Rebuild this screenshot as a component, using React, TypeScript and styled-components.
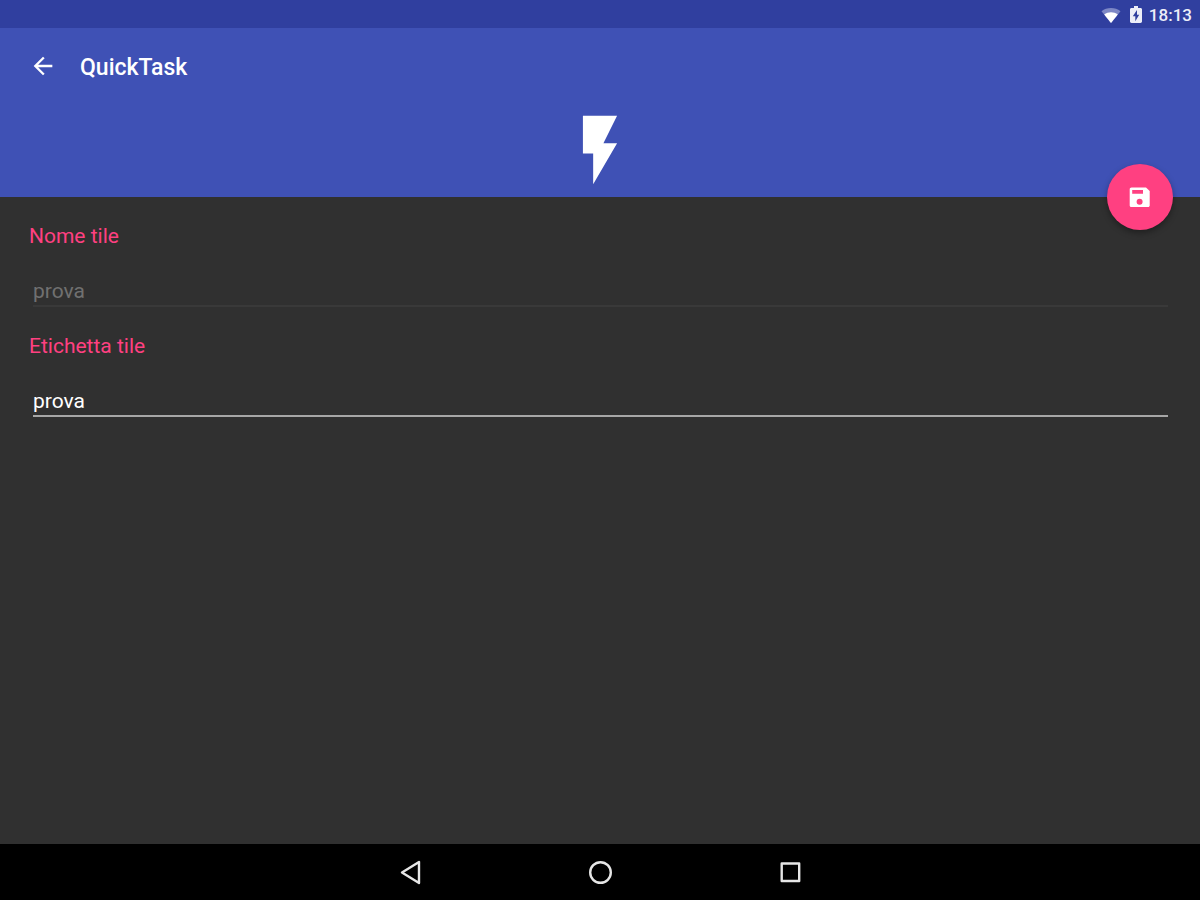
import React, { useState } from "react";
import styled, { createGlobalStyle } from "styled-components";

const GlobalStyle = createGlobalStyle`
  *, *::before, *::after { box-sizing: border-box; }
  body {
    margin: 0;
    background: #303030;
    font-family: Roboto, "Noto Sans", sans-serif;
    color: #fff;
  }
  button { border: 0; padding: 0; background: none; color: inherit; cursor: pointer; }
  svg { display: block; }
`;

const Screen = styled.div`
  min-height: 100vh;
  display: flex;
  flex-direction: column;
`;

const StatusBar = styled.div`
  height: 28px;
  padding: 2px 8px 0 0;
  display: flex;
  align-items: center;
  justify-content: flex-end;
  background: #303f9f;
`;

const WifiIcon = styled.svg`
  width: 20px;
  height: 20px;
`;

const BatteryIcon = styled.svg`
  width: 20px;
  height: 20px;
  margin: 0 3px 0 5px;
`;

const Clock = styled.time`
  font-size: 17px;
  line-height: 20px;
  font-weight: 500;
  color: #eceef8;
`;

const Header = styled.header`
  position: relative;
  height: 169px;
  display: flex;
  flex-direction: column;
  align-items: center;
  background: #3f51b5;
`;

const Toolbar = styled.div`
  align-self: stretch;
  height: 76px;
  padding-left: 29px;
  display: flex;
  align-items: center;
  gap: 23px;
`;

const IconButton = styled.button<{ $size: number }>`
  width: ${(p) => p.$size}px;
  height: ${(p) => p.$size}px;

  svg { width: 100%; height: 100%; }
`;

const Title = styled.h1`
  margin: 0;
  padding-top: 3px;
  font-size: 23px;
  line-height: 28px;
  font-weight: 500;
`;

const Bolt = styled.svg`
  width: 82px;
  height: 82px;
  margin-top: 5px;
`;

const SaveButton = styled.button`
  position: absolute;
  right: 27px;
  bottom: -33px;
  width: 66px;
  height: 66px;
  display: flex;
  align-items: center;
  justify-content: center;
  border-radius: 50%;
  background: #ff4081;
  box-shadow: 0 3px 6px rgba(0, 0, 0, 0.35);

  svg { width: 26px; height: 26px; }
`;

const Form = styled.form`
  flex: 1;
  padding: 25px 28px 25px 29px;
  display: flex;
  flex-direction: column;
  gap: 25px;
`;

const Field = styled.div`
  display: flex;
  flex-direction: column;
  gap: 27px;
`;

const Label = styled.label`
  font-size: 21px;
  line-height: 28px;
  color: #ff4081;
`;

const TextInput = styled.input`
  height: 30px;
  margin: 0 4px;
  padding: 0;
  border: 0;
  border-bottom: 2px solid #a6a6a6;
  border-radius: 0;
  outline: 0;
  background: transparent;
  font: 21px/28px Roboto, "Noto Sans", sans-serif;
  color: #fff;

  &:disabled {
    color: #707070;
    border-bottom-color: #393939;
  }
`;

const NavBar = styled.nav`
  height: 56px;
  display: flex;
  align-items: center;
  justify-content: center;
  gap: 162px;
  background: #000;
  color: #e6e6e6;
`;

export default function App() {
  const [caption, setCaption] = useState("prova");

  return (
    <Screen>
      <GlobalStyle />
      <StatusBar>
        <WifiIcon viewBox="0 0 20 20" aria-label="Wi-Fi">
          <path d="M10 18 0.5 6.2C3.2 4 6.4 3 10 3s6.8 1 9.5 3.2z" fill="#7d87c5" />
          <path d="M10 18 3.2 9.5C5.2 8 7.5 7.3 10 7.3s4.8.7 6.8 2.2z" fill="#fff" />
        </WifiIcon>
        <BatteryIcon viewBox="0 0 20 20" aria-label="Battery charging">
          <path
            fill="#eceef8"
            fillRule="evenodd"
            d="M8 1h4v2h2.500c.8 0 1.500.6 1.500 1.400v12.200c0 .8-.7 1.400-1.500 1.400h-9C4.700 18 4 17.400 4 16.600V4.400C4 3.600 4.700 3 5.500 3H8zM11 5 6.800 11.300H9.300V16.300L13.200 9.700H11z"
          />
        </BatteryIcon>
        <Clock>18:13</Clock>
      </StatusBar>

      <Header>
        <Toolbar>
          <IconButton type="button" $size={28} aria-label="Indietro">
            <svg viewBox="0 0 24 24" fill="currentColor">
              <path d="M20 11H7.830l5.590-5.590L12 4l-8 8 8 8 1.410-1.410L7.830 13H20z" />
            </svg>
          </IconButton>
          <Title>QuickTask</Title>
        </Toolbar>
        <Bolt viewBox="0 0 24 24" fill="#fff" aria-hidden="true">
          <path d="M7 2v11h3v9l7-12h-4l4-8z" />
        </Bolt>
        <SaveButton type="submit" form="tile" aria-label="Salva">
          <svg viewBox="0 0 26 26" fill="currentColor">
            <path
              fillRule="evenodd"
              d="M4.500 3.500h14.500L22.700 7v14.500c0 .8-.7 1.500-1.500 1.500H4.200C3.400 23 2.700 22.300 2.700 21.500V5.300c0-1 .8-1.800 1.800-1.800zM5.200 6v3.800h10.800V6zM12.600 14.800a3 3 0 1 0 0 6 3 3 0 0 0 0-6z"
            />
          </svg>
        </SaveButton>
      </Header>

      <Form id="tile" onSubmit={(e) => e.preventDefault()}>
        <Field>
          <Label htmlFor="tile-name">Nome tile</Label>
          <TextInput id="tile-name" value="prova" disabled readOnly />
        </Field>
        <Field>
          <Label htmlFor="tile-caption">Etichetta tile</Label>
          <TextInput
            id="tile-caption"
            value={caption}
            spellCheck={false}
            onChange={(e) => setCaption(e.target.value)}
          />
        </Field>
      </Form>

      <NavBar>
        <IconButton type="button" $size={28} aria-label="Back">
          <svg viewBox="0 0 28 28" fill="none" stroke="currentColor" strokeWidth="2.400" strokeLinejoin="round">
            <path d="M23 4v21L6 14.500z" />
          </svg>
        </IconButton>
        <IconButton type="button" $size={28} aria-label="Home">
          <svg viewBox="0 0 28 28" fill="none" stroke="currentColor" strokeWidth="2.400">
            <circle cx="14.500" cy="14.500" r="10.300" />
          </svg>
        </IconButton>
        <IconButton type="button" $size={28} aria-label="Recents">
          <svg viewBox="0 0 28 28" fill="none" stroke="currentColor" strokeWidth="2.400" strokeLinejoin="round">
            <path d="M5.700 5.500h17.500v17.500H5.700z" />
          </svg>
        </IconButton>
      </NavBar>
    </Screen>
  );
}
